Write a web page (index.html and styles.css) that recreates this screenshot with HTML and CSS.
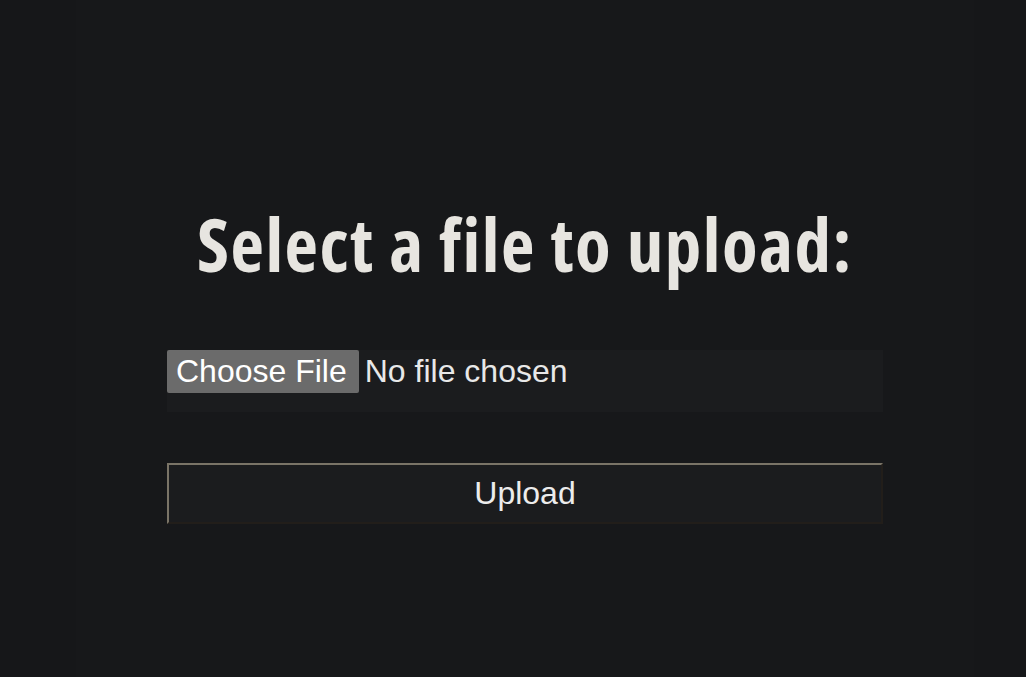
FILE: index.html
```html
<!DOCTYPE html>
<html lang="en">
<head>
<meta charset="utf-8">
<title>Upload</title>
<link rel="stylesheet" href="styles.css">
</head>
<body>
<main class="panel">
  <form class="upload-form">
    <h1 class="title">Select a file to upload:</h1>
    <input class="file-input" type="file" name="file">
    <button class="upload-btn" type="button">Upload</button>
  </form>
</main>
</body>
</html>
```

FILE: styles.css
```css
html, body {
  margin: 0;
  padding: 0;
  background: #161719;
  height: 100%;
}
.panel {
  margin-left: 76px;
  width: 898px;
  min-height: 677px;
  background: #17181a;
  box-sizing: border-box;
  padding-top: 207px;
}
.upload-form {
  display: flex;
  flex-direction: column;
  align-items: center;
}
.title {
  margin: 0;
  font-family: "Open Sans", "Roboto", sans-serif;
  font-stretch: 75%;
  font-weight: bold;
  font-size: 73px;
  line-height: 73px;
  letter-spacing: 1.5px;
  color: #e7e5e0;
}
.file-input {
  margin-top: 70px;
  width: 716px;
  height: 62px;
  box-sizing: border-box;
  padding: 0 0 19px 0;
  background: #1b1c1e;
  border: none;
  font-family: "Liberation Sans", Arial, sans-serif;
  font-size: 32px;
  color: #e8e8e8;
  display: block;
}
.file-input::file-selector-button {
  font-family: "Liberation Sans", Arial, sans-serif;
  font-size: 32px;
  color: #ffffff;
  background: #6b6b6b;
  border: none;
  border-radius: 2px;
  height: 43px;
  padding: 0 12px 0 9px;
  margin: 0 6px 0 0;
}
.upload-btn {
  margin-top: 51px;
  width: 716px;
  height: 61px;
  box-sizing: border-box;
  background: #1b1c1e;
  border-style: solid;
  border-width: 2px;
  border-color: #7a7467 #221e1a #221e1a #7a7467;
  font-family: "Liberation Sans", Arial, sans-serif;
  font-size: 32px;
  color: #ececec;
  padding: 0;
}
```
